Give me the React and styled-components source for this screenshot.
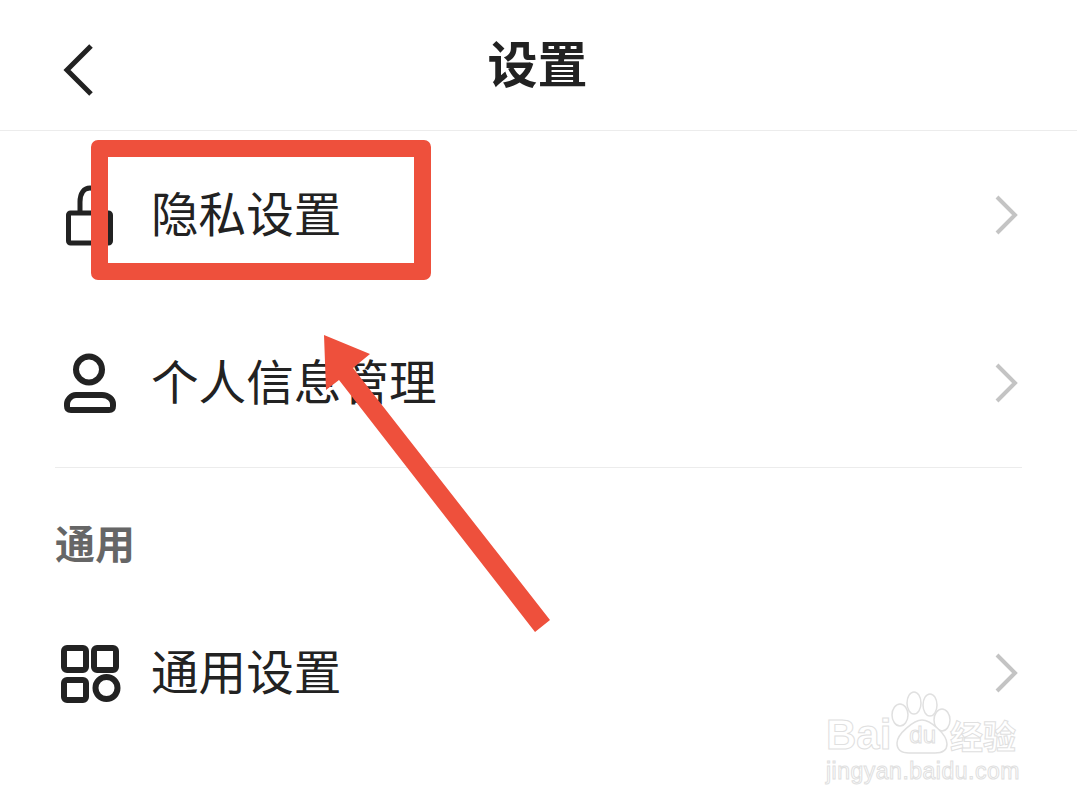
import React from "react";
import styled, { createGlobalStyle } from "styled-components";

const Global = createGlobalStyle`
  html, body { margin: 0; padding: 0; background: #fff; }
  body { font-family: "Noto Sans CJK SC", "Noto Sans", sans-serif; color: #222; }
`;

const Page = styled.div`
  position: relative;
  width: 1077px;
  height: 807px;
  overflow: hidden;
  background: #fff;
`;

const Header = styled.header`
  display: flex;
  align-items: center;
  justify-content: center;
  position: relative;
  height: 130px;
  border-bottom: 1px solid #ececec;
  box-sizing: content-box;
`;

const BackIcon = styled.svg`
  position: absolute;
  left: 60px;
  top: 40px;
`;

const Title = styled.h1`
  margin: 0 2px 9px 0;
  font-size: 50px;
  font-weight: 700;
  line-height: 1;
  color: #222;
`;

const Row = styled.div`
  display: flex;
  align-items: center;
  height: ${(p) => p.$height || 168}px;
  padding: 0 60px;
  box-sizing: border-box;
`;

const RowIcon = styled.svg`
  flex: none;
  width: 60px;
  height: 60px;
  margin-right: 31px;
  overflow: visible;
`;

const RowLabel = styled.span`
  flex: 1;
  margin-bottom: 6px;
  font-size: 47.6px;
  line-height: 1;
  color: #222;
`;

const Chevron = styled.svg`
  flex: none;
  margin-right: -1px;
  margin-top: -1px;
`;

const Divider = styled.div`
  height: 1px;
  margin: 0 55px;
  background: #ececec;
`;

const SectionTitle = styled.div`
  padding: 53px 55px 0;
  height: 119px;
  font-size: 40px;
  font-weight: 700;
  line-height: 42px;
  color: #666;
  box-sizing: border-box;
`;

const Highlight = styled.div`
  position: absolute;
  left: 91px;
  top: 140px;
  width: 340px;
  height: 140px;
  border: 17px solid #ee503c;
  border-radius: 7px;
  box-sizing: border-box;
`;

const ArrowMark = styled.svg`
  position: absolute;
  left: 0;
  top: 0;
`;

const Watermark = styled.div`
  position: absolute;
  left: 826px;
  top: 690px;
  width: 200px;
  color: #fff;
  -webkit-text-stroke: 1px #e0e0e0;
`;

const Paw = styled.svg`
  position: absolute;
  left: 62px;
  top: 0;
`;

const BrandLine = styled.div`
  display: flex;
  align-items: center;
  height: 36px;
  margin-top: 27px;
  font-family: "Liberation Sans", sans-serif;
  font-size: 42px;
  font-weight: 700;
  line-height: 36px;
  white-space: nowrap;
`;

const Du = styled.span`
  position: relative;
  margin-left: 18px;
  font-size: 24px;
  font-weight: 400;
`;

const Jing = styled.span`
  margin-left: 14px;
  font-family: "Noto Sans CJK SC", sans-serif;
  font-size: 33px;
  font-weight: 700;
`;

const Domain = styled.div`
  margin-top: 5px;
  font-family: "Liberation Sans", sans-serif;
  font-size: 23px;
  line-height: 26px;
  letter-spacing: 0.5px;
  white-space: nowrap;
`;

const ChevronRight = () => (
  <Chevron width="24" height="42" viewBox="0 0 24 42" fill="none">
    <path d="M3 3l18 18L3 39" stroke="#c4c4c4" strokeWidth="4" />
  </Chevron>
);

const App = () => (
  <Page>
    <Global />
    <Header>
      <BackIcon width="36" height="60" viewBox="0 0 36 60" fill="none">
        <path d="M31 6L7 30l24 24" stroke="#222" strokeWidth="5" />
      </BackIcon>
      <Title>设置</Title>
    </Header>

    <Row>
      <RowIcon viewBox="0 0 60 60" fill="none" stroke="#222" strokeWidth="5">
        <path d="M20 28V17C20 8 24 3 30 3s10 5 10 14v11" />
        <rect x="8.5" y="28" width="42" height="30" rx="2" />
      </RowIcon>
      <RowLabel>隐私设置</RowLabel>
      <ChevronRight />
    </Row>
    <Row>
      <RowIcon viewBox="0 0 60 60" fill="none" stroke="#222" strokeWidth="6">
        <circle cx="29" cy="16.5" r="13" />
        <path d="M16 42h26c7 0 11 5 11 9v2c0 3-1 4-4 4H11c-3 0-4-1-4-4v-2c0-4 4-9 9-9z" />
      </RowIcon>
      <RowLabel>个人信息管理</RowLabel>
      <ChevronRight />
    </Row>
    <Divider />
    <SectionTitle>通用</SectionTitle>
    <Row $height={172}>
      <RowIcon viewBox="0 0 60 60" fill="none" stroke="#222" strokeWidth="6">
        <rect x="4" y="5" width="22" height="22" rx="3" />
        <rect x="34" y="5" width="22" height="22" rx="3" />
        <rect x="4" y="37" width="22" height="20" rx="3" />
        <circle cx="46.5" cy="45" r="11" />
      </RowIcon>
      <RowLabel>通用设置</RowLabel>
      <ChevronRight />
    </Row>

    <Highlight />
    <ArrowMark width="1077" height="807" viewBox="0 0 1077 807">
      <path
        d="M324 335L370 354L353 368L550 620L535 632L339 380L326 390Z"
        fill="#ee503c"
      />
    </ArrowMark>

    <Watermark>
      <Paw width="70" height="70" viewBox="0 0 70 70" fill="#fff" stroke="#e0e0e0" strokeWidth="1.5">
        <ellipse cx="12" cy="25" rx="8" ry="11" />
        <ellipse cx="26" cy="13" rx="7" ry="11" />
        <ellipse cx="42" cy="15" rx="7" ry="11" />
        <ellipse cx="54" cy="30" rx="8" ry="11" />
        <path d="M9 53C9 44 26 30 34 30s25 14 25 24c0 7-6 9-12 9H21C14 63 9 60 9 53Z" />
      </Paw>
      <BrandLine>
        Bai
        <Du>du</Du>
        <Jing>经验</Jing>
      </BrandLine>
      <Domain>jingyan.baidu.com</Domain>
    </Watermark>
  </Page>
);

export default App;
